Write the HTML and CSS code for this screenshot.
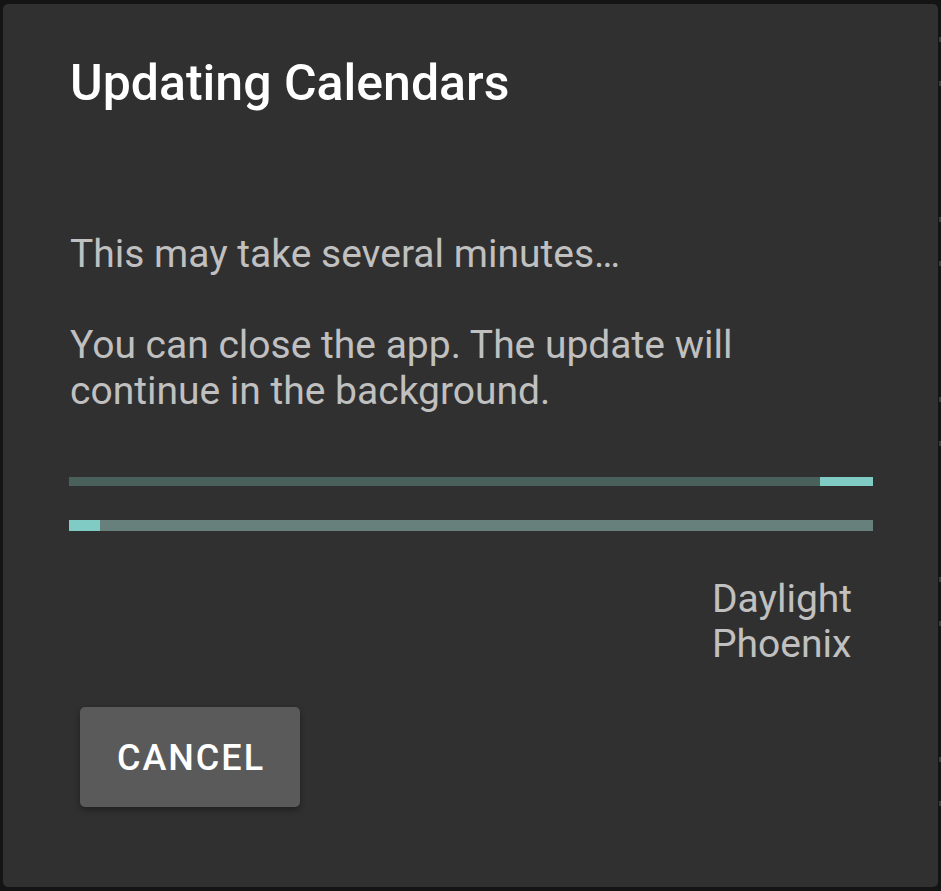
FILE: index.html
```html
<!DOCTYPE html>
<html lang="en">
<head>
<meta charset="utf-8">
<title>Updating Calendars</title>
<link rel="stylesheet" href="styles.css">
</head>
<body>
<div class="dialog">
  <h1 class="title">Updating Calendars</h1>
  <p class="msg msg-first">This may take several minutes…</p>
  <p class="msg msg-second">You can close the app. The update will continue in the background.</p>
  <div class="bar bar-top"><div class="bar-fill bar-fill-end"></div></div>
  <div class="bar bar-bottom"><div class="bar-fill bar-fill-start"></div></div>
  <div class="calendar-name">Daylight<br>Phoenix</div>
  <button class="cancel" type="button">CANCEL</button>
</div>
</body>
</html>
```
FILE: styles.css
```css
html, body {
  margin: 0;
  padding: 0;
}
body {
  width: 941px;
  height: 891px;
  background-color: #141414;
  background-image: repeating-linear-gradient(to bottom,
    transparent 0px, transparent 37px,
    #3c3c3c 37px, #3c3c3c 42px,
    transparent 42px, transparent 81px,
    #3c3c3c 81px, #3c3c3c 86px,
    transparent 86px, transparent 180px);
  background-size: 2px 891px;
  background-position: right top;
  background-repeat: no-repeat;
  font-family: Roboto, "Noto Sans", sans-serif;
  padding: 4px 3px 0 3px;
  box-sizing: border-box;
  overflow: hidden;
}
.dialog {
  width: 935px;
  height: 883px;
  box-sizing: border-box;
  background: #303030;
  border-radius: 5px;
  padding: 49px 65px 0 66px;
  display: flex;
  flex-direction: column;
}
.title {
  margin: 0;
  font-size: 50px;
  font-weight: 500;
  line-height: 60px;
  color: #ffffff;
  padding-left: 1px;
}
.msg {
  margin: 0;
  font-size: 39px;
  line-height: 46px;
  color: #c0c0c0;
  padding-left: 1px;
}
.msg-first {
  margin-top: 118px;
}
.msg-second {
  margin-top: 45px;
  width: 720px;
}
.bar {
  position: relative;
  width: 804px;
  display: flex;
}
.bar-top {
  margin-top: 63px;
  height: 9px;
  background: #4a605b;
  justify-content: flex-end;
}
.bar-bottom {
  margin-top: 34px;
  height: 11px;
  background: #68807b;
}
.bar-fill {
  height: 100%;
  background: #80cbc4;
}
.bar-fill-end {
  width: 53px;
}
.bar-fill-start {
  width: 31px;
}
.calendar-name {
  margin-top: 46px;
  align-self: flex-start;
  margin-left: 643px;
  font-size: 39px;
  line-height: 45px;
  color: #c0c0c0;
}
.cancel {
  margin-top: 40px;
  margin-left: 11px;
  width: 220px;
  height: 100px;
  border: none;
  border-radius: 5px;
  background: #5a5a5b;
  color: #ffffff;
  font-family: Roboto, "Noto Sans", sans-serif;
  font-size: 36px;
  font-weight: 500;
  letter-spacing: 2px;
  padding: 2px 0 0 2px;
  box-shadow: 0 3px 6px rgba(0, 0, 0, 0.35);
  align-self: flex-start;
}
```
